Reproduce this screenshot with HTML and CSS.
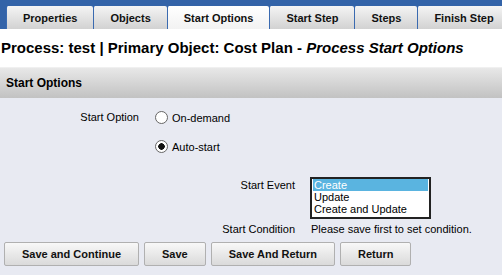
FILE: index.html
```html
<!DOCTYPE html>
<html lang="en">
  <head>
    <meta charset="UTF-8" />
    <title>Process Start Options</title>
    <link rel="stylesheet" href="styles.css">
  </head>
  <body>
    <div class="tabbar">
      <div class="tab">Properties</div>
      <div class="tab">Objects</div>
      <div class="tab active">Start Options</div>
      <div class="tab">Start Step</div>
      <div class="tab">Steps</div>
      <div class="tab">Finish Step</div>
    </div>
    <h1 class="title">Process: test | Primary Object: Cost Plan - <em>Process Start Options</em></h1>
    <div class="section">
      <div class="section-header">Start Options</div>
      <div class="section-body">
        <div class="options">
          <div class="row">
            <span class="label">Start Option</span>
            <label class="radio"><input type="radio" name="start" /> On-demand</label>
          </div>
          <div class="row">
            <span class="label"></span>
            <label class="radio"><input type="radio" name="start" checked /> Auto-start</label>
          </div>
        </div>
        <div class="events">
          <div class="row">
            <span class="label">Start Event</span>
            <div class="listbox">
              <div class="item selected">Create</div>
              <div class="item">Update</div>
              <div class="item">Create and Update</div>
            </div>
          </div>
          <div class="row">
            <span class="label">Start Condition</span>
            <span class="value">Please save first to set condition.</span>
          </div>
        </div>
        <div class="actions">
          <button>Save and Continue</button>
          <button>Save</button>
          <button>Save And Return</button>
          <button>Return</button>
        </div>
      </div>
    </div>
  </body>
</html>
```

FILE: styles.css
```css
body {
  font-family: "Liberation Sans", Arial, sans-serif;
  margin: 0;
  background-color: white;
  color: #000;
}
.tabbar {
  display: flex;
  background-color: #3363a8;
  padding: 6px 0 0 6px;
  overflow: hidden;
  white-space: nowrap;
}
.tab {
  flex: none;
  height: 23px;
  line-height: 24px;
  padding: 0 16px;
  font-size: 11px;
  font-weight: bold;
  color: #111;
  border-left: 1px solid #3a6ab0;
  border-top-left-radius: 2px;
  border-top-right-radius: 2px;
  background: linear-gradient(#f4f4f4, #d2d2d2);
}
.tab.active {
  background: linear-gradient(#ffffff, #f2f2f2);
}
.title {
  font-size: 15px;
  line-height: 18px;
  font-weight: bold;
  margin: 10px 0 10px 1px;
  white-space: nowrap;
}
.title em {
  font-style: italic;
}
.section-header {
  height: 30px;
  line-height: 30px;
  padding-left: 6px;
  font-size: 12px;
  font-weight: bold;
  border-top: 1px solid #f0f0f0;
  background: linear-gradient(#e8e8e8, #c2c2c2);
}
.section-body {
  background-color: #e8eaf2;
  padding: 13px 0 9px 0;
  font-size: 11px;
}
.row {
  display: flex;
  align-items: flex-start;
}
.options .label {
  width: 139px;
  text-align: right;
  margin-right: 16px;
}
.options .row {
  height: 29px;
}
.radio {
  display: flex;
  align-items: center;
  gap: 4px;
}
.radio input {
  appearance: none;
  width: 13px;
  height: 13px;
  margin: 0;
  border: 1px solid #666;
  border-radius: 50%;
  background: white;
}
.radio input:checked {
  background: radial-gradient(circle, #111 0, #111 3px, white 3.5px);
}
.events {
  margin-top: 8px;
}
.events .label {
  width: 295px;
  text-align: right;
  margin-right: 15px;
}
.events .row:first-child .label {
  padding-top: 2px;
}
.events .row + .row {
  margin-top: 4px;
}
.listbox {
  width: 115px;
  border: 2px solid #222;
  background: white;
  padding: 0 1px 2px 1px;
}
.item {
  height: 12px;
  line-height: 12px;
  padding-left: 1px;
}
.item.selected {
  background-color: #5ab4e0;
  color: white;
}
.value {
  margin-left: 1px;
}
.actions {
  display: flex;
  gap: 5px;
  padding-left: 4px;
  margin-top: 7px;
}
button {
  font-family: "Liberation Sans", Arial, sans-serif;
  font-size: 11px;
  font-weight: bold;
  color: #111;
  height: 24px;
  padding: 0 17px;
  border: 1px solid #b0b0b0;
  border-radius: 2px;
  background: linear-gradient(#f8f8f8, #dadada);
  cursor: pointer;
}
```
